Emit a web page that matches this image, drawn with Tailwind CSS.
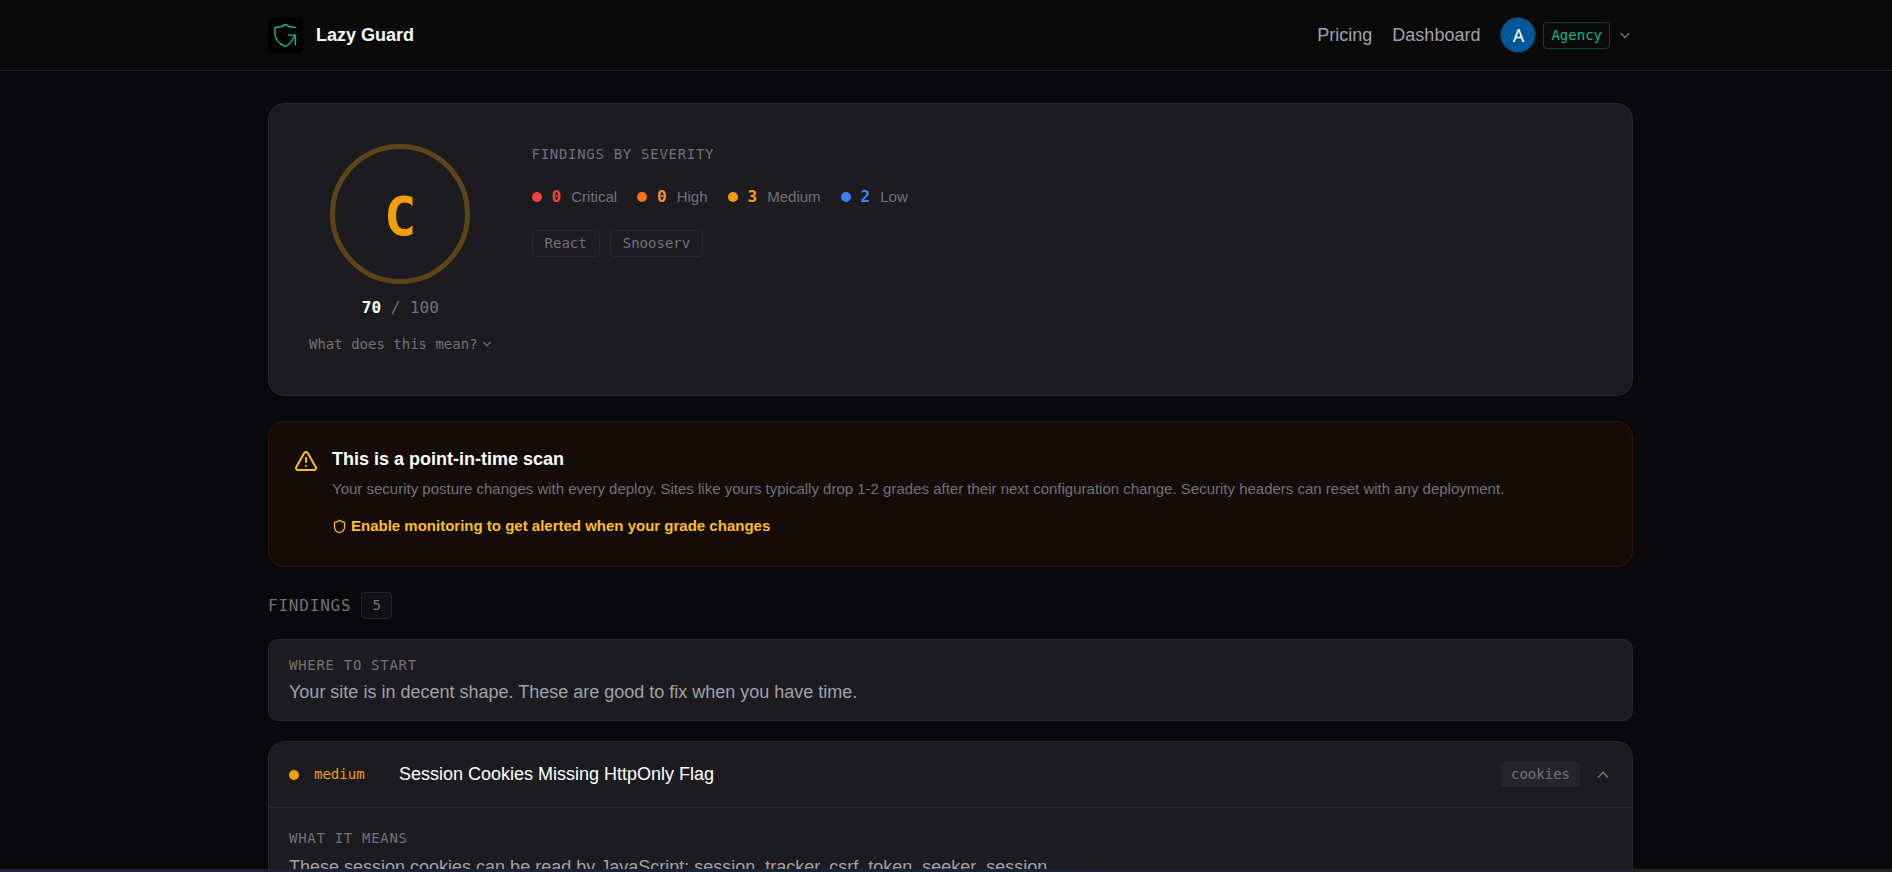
<!DOCTYPE html>
<html lang="en">
<head>
<meta charset="utf-8">
<meta name="viewport" content="width=device-width, initial-scale=1">
<title>Lazy Guard</title>
<script src="https://cdn.jsdelivr.net/npm/@tailwindcss/browser@4"></script>
</head>
<body class="flex h-screen flex-col overflow-hidden bg-[#09090b] font-['Liberation_Sans',Arial,sans-serif] text-[#71717a]">

<header class="shrink-0 border-b border-[#27272a] bg-[#0a0a0a] pl-[9px]">
  <div class="mx-auto flex h-[70px] max-w-[1365px] items-center justify-between">
    <a href="#" class="flex items-center gap-[13px] text-[18px] font-bold text-[#fafafa]">
      <span class="flex size-[35px] items-center justify-center rounded bg-black">
        <svg class="size-[25px]" viewBox="0 0 25 25" fill="none" stroke="#10b981" stroke-width="1.4" aria-hidden="true">
          <path d="M22.8 4.5C18.6 4.5 15.4 3.6 12.3 1.4C9.2 3.6 6 4.5 2 4.5V10.5C2 16.6 6.4 21 12.3 23.4C15.4 22.1 17.6 19.6 19 17.3L22 12.4"/>
          <path d="M14.6 12.1H22.4V22.6"/>
        </svg>
      </span>
      Lazy Guard
    </a>
    <nav class="flex items-center gap-5 text-[18px] text-[#a1a1aa]">
      <a href="#">Pricing</a>
      <a href="#">Dashboard</a>
      <button type="button" class="flex items-center gap-[7px] pr-[2px]">
        <span class="flex size-9 items-center justify-center rounded-full border border-[#27272a] bg-[#01579b] font-['Noto_Sans',sans-serif] text-[18px] text-white">A</span>
        <span class="rounded border border-[#0b4431] px-[7px] font-['DejaVu_Sans_Mono',monospace] text-[14px] leading-[25px] text-[#10b981]">Agency</span>
        <svg class="ml-[2px] size-3" viewBox="0 0 12 12" fill="none" stroke="#71717a" stroke-width="1.4" aria-hidden="true"><path d="M1.5 4L6 8.5L10.5 4"/></svg>
      </button>
    </nav>
  </div>
</header>

<main class="min-h-0 flex-1 overflow-hidden pt-8 pl-[9px]">
  <div class="mx-auto max-w-[1365px]">

    <section class="flex gap-10 rounded-2xl border border-[#27272a] bg-[#1c1c20] px-10 pt-10 pb-[39px]">
      <div class="flex flex-col items-center">
        <div class="flex size-[140px] items-center justify-center rounded-full border-5 border-[#5d4419] pt-1 font-['DejaVu_Sans_Mono',monospace] text-[54px] font-bold text-[#f59e0b]">C</div>
        <p class="mt-3 font-['DejaVu_Sans_Mono',monospace] text-[16px] leading-6"><strong class="text-white">70</strong> / 100</p>
        <button type="button" class="mt-3 flex items-center gap-1 font-['DejaVu_Sans_Mono',monospace] text-[14px] leading-6">What does this mean?
          <svg class="size-[10px]" viewBox="0 0 10 10" fill="none" stroke="currentColor" stroke-width="1.3" aria-hidden="true"><path d="M1.5 3.2L5 6.7L8.5 3.2"/></svg>
        </button>
      </div>
      <div>
        <h2 class="font-['DejaVu_Sans_Mono',monospace] text-[14px] leading-5 tracking-wider">FINDINGS BY SEVERITY</h2>
        <ul class="mt-[21px] flex gap-5 text-[15px] leading-6">
          <li class="flex items-center gap-[10px]"><span class="size-[10px] rounded-full bg-[#ef4444]"></span><b class="font-['DejaVu_Sans_Mono',monospace] text-[16px] text-[#ef4444]">0</b>Critical</li>
          <li class="flex items-center gap-[10px]"><span class="size-[10px] rounded-full bg-[#f97316]"></span><b class="font-['DejaVu_Sans_Mono',monospace] text-[16px] text-[#fb923c]">0</b>High</li>
          <li class="flex items-center gap-[10px]"><span class="size-[10px] rounded-full bg-[#f59e0b]"></span><b class="font-['DejaVu_Sans_Mono',monospace] text-[16px] text-[#f59e0b]">3</b>Medium</li>
          <li class="flex items-center gap-[10px]"><span class="size-[10px] rounded-full bg-[#3b82f6]"></span><b class="font-['DejaVu_Sans_Mono',monospace] text-[16px] text-[#3b82f6]">2</b>Low</li>
        </ul>
        <ul class="mt-[21px] flex gap-[10px] font-['DejaVu_Sans_Mono',monospace] text-[14px] leading-[25px]">
          <li class="rounded border border-[#27272a] px-3">React</li>
          <li class="rounded border border-[#27272a] px-3">Snooserv</li>
        </ul>
      </div>
    </section>

    <section class="mt-[25px] flex gap-[14px] rounded-2xl border border-[#2c170c] bg-[#150b08] px-[25px] pt-[25px] pb-[28px]">
      <svg class="mt-[2px] size-6 shrink-0" viewBox="0 0 24 24" fill="none" stroke="#fbbf24" stroke-width="2" stroke-linecap="round" stroke-linejoin="round" aria-hidden="true"><path d="M21.73 18l-8-14a2 2 0 0 0-3.46 0l-8 14A2 2 0 0 0 4 21h16a2 2 0 0 0 1.73-3M12 9v4M12 17h.01"/></svg>
      <div>
        <h2 class="text-[18px] leading-6 font-bold text-white">This is a point-in-time scan</h2>
        <p class="mt-[6px] text-[15px] leading-6">Your security posture changes with every deploy. Sites like yours typically drop 1-2 grades after their next configuration change. Security headers can reset with any deployment.</p>
        <a href="#" class="mt-[13px] flex items-center gap-1 text-[15px] leading-6 font-bold text-[#fbbf24]">
          <svg class="size-[15px]" viewBox="0 0 24 24" fill="none" stroke="currentColor" stroke-width="2" stroke-linecap="round" stroke-linejoin="round" aria-hidden="true"><path d="M20 13c0 5-3.5 7.5-7.66 8.95a1 1 0 0 1-.67-.01C7.5 20.5 4 18 4 13V6a1 1 0 0 1 1-1c2 0 4.5-1.2 6.24-2.72a1.17 1.17 0 0 1 1.52 0C14.51 3.81 17 5 19 5a1 1 0 0 1 1 1z"/></svg>
          Enable monitoring to get alerted when your grade changes
        </a>
      </div>
    </section>

    <div class="mt-[25px] flex items-center gap-[10px] font-['DejaVu_Sans_Mono',monospace]">
      <h2 class="text-[16px] tracking-wider">FINDINGS</h2>
      <span class="rounded border border-[#27272a] bg-[#111113] px-[10px] text-[14px] leading-[25px]">5</span>
    </div>

    <section class="mt-5 rounded-[10px] border border-[#27272a] bg-[#1c1c20] px-5 py-[15px]">
      <h3 class="font-['DejaVu_Sans_Mono',monospace] text-[14px] leading-5 tracking-wider">WHERE TO START</h3>
      <p class="mt-1 text-[18px] leading-[26px] text-[#a1a1aa]">Your site is in decent shape. These are good to fix when you have time.</p>
    </section>

    <article class="mt-5 rounded-t-2xl border border-[#27272a] bg-[#1c1c20]">
      <button type="button" class="flex h-[66px] w-full items-center border-b border-[#27272a] px-5 text-left">
        <span class="size-[10px] rounded-full bg-[#f59e0b]"></span>
        <span class="ml-[15px] w-[85px] font-['DejaVu_Sans_Mono',monospace] text-[14px] text-[#f59e0b]">medium</span>
        <span class="flex-1 text-[18px] text-white">Session Cookies Missing HttpOnly Flag</span>
        <span class="rounded bg-[#252529] px-[10px] font-['DejaVu_Sans_Mono',monospace] text-[14px] leading-[25px]">cookies</span>
        <svg class="mr-[2px] ml-4 size-[14px]" viewBox="0 0 14 14" fill="none" stroke="#71717a" stroke-width="1.6" aria-hidden="true"><path d="M2 9.5L7 4.5L12 9.5"/></svg>
      </button>
      <div class="px-5 pt-5 pb-10">
        <h3 class="font-['DejaVu_Sans_Mono',monospace] text-[14px] leading-5 tracking-wider">WHAT IT MEANS</h3>
        <p class="mt-[5px] text-[18px] leading-7 text-[#a1a1aa]">These session cookies can be read by JavaScript: session_tracker, csrf_token, seeker_session</p>
      </div>
    </article>
  </div>
</main>
<div class="h-[3px] shrink-0 bg-linear-to-r from-[#1c2333] via-[#182334] to-[#26222c]"></div>
</body>
</html>
